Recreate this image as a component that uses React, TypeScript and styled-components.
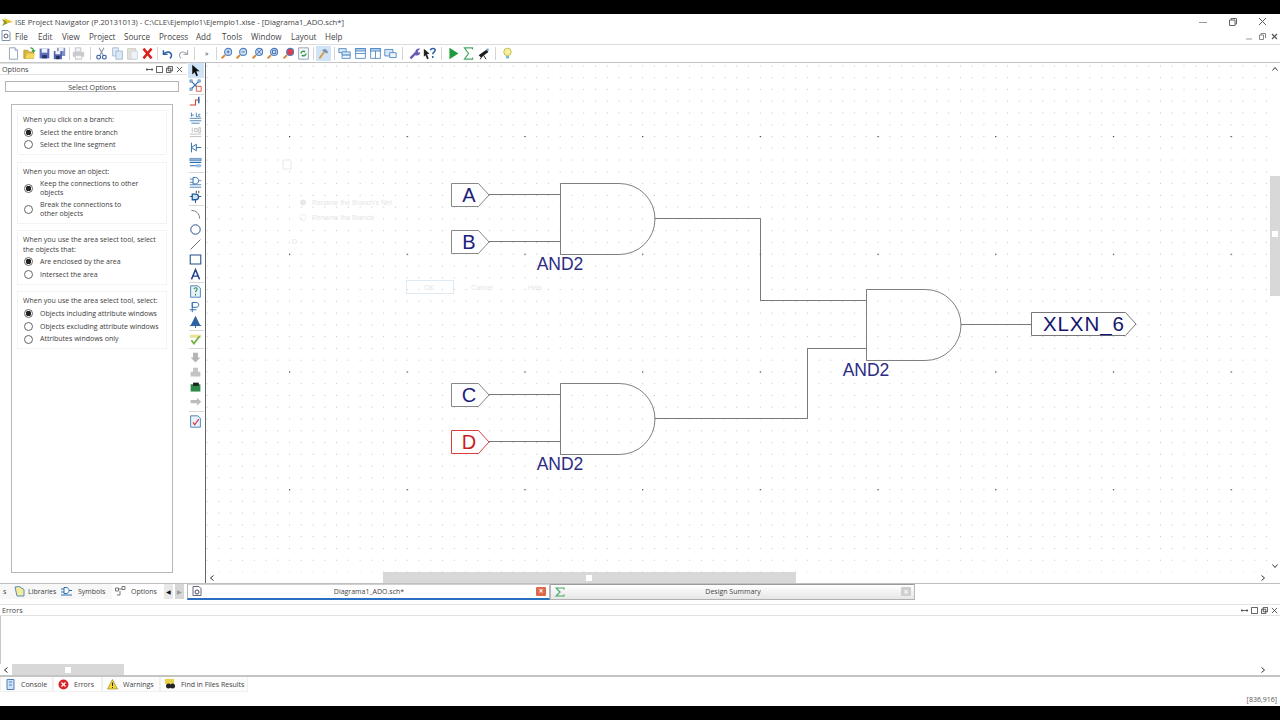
import React from 'react';
import styled, { createGlobalStyle } from 'styled-components';

const GlobalStyle = createGlobalStyle`
    html, body { margin: 0; padding: 0; background: #000; }
    body { font-family: "Open Sans", "Liberation Sans", sans-serif; color: #3a3a3a; }
    * { box-sizing: border-box; }
`;

const Shell = styled.div`
    width: 1280px;
    height: 720px;
    padding: 14px 0;
    background: #000;
    overflow: hidden;
`;

const Win = styled.div`
    height: 692px;
    background: #fff;
    display: flex;
    flex-direction: column;
`;

const TitleBar = styled.div`
    height: 15px;
    display: flex;
    align-items: center;
    font-size: 7.7px;
    color: #444;
    padding-left: 2px;
    white-space: nowrap;
`;

const TitleText = styled.span`
    margin-left: 2px;
    flex: 1;
`;

const WinButtons = styled.div`
    display: flex;
    align-items: center;
    width: 81px;
    gap: 21.5px;
`;

const MenuBar = styled.div`
    height: 15px;
    display: flex;
    align-items: center;
    font-size: 8.1px;
    color: #444;
    padding-left: 1px;
    white-space: nowrap;
`;

const MenuItem = styled.span<{ $w: number }>`
    width: ${(p) => p.$w}px;
`;

const MdiButtons = styled.div`
    margin-left: auto;
    width: 34px;
    display: flex;
    gap: 5.5px;
    align-items: center;
`;

const Toolbar = styled.div`
    height: 18px;
    flex: none;
    display: flex;
    align-items: center;
    padding-left: 6px;
    border-top: 1px solid #dcdcdc;
`;

const ToolBtn = styled.span<{ $active?: boolean }>`
    flex: none;
    width: 15.4px;
    height: 15.4px;
    display: flex;
    align-items: center;
    justify-content: center;
    background: ${(p) => (p.$active ? '#cfe4f6' : 'transparent')};
    svg { width: 13px; height: 13px; display: block; }
`;

const SideBtn = styled(ToolBtn)`
    height: 15px;
`;

const HSep = styled.span<{ $w: number }>`
    flex: none;
    width: ${(p) => p.$w}px;
    height: 13px;
    background: linear-gradient(#d4d4d4, #d4d4d4) center / 1px 100% no-repeat;
`;

const Chevrons = styled.span`
    flex: none;
    width: 16px;
    text-align: center;
    font-size: 7px;
    color: #333;
`;

const Main = styled.div`
    height: 521px;
    flex: none;
    display: grid;
    grid-template-columns: 187px 19px 1fr;
    border-top: 1px solid #c4c4c4;
`;

const SidePanel = styled.div`
    display: flex;
    flex-direction: column;
    padding-bottom: 10px;
`;

const DockHeader = styled.div`
    height: 12px;
    flex: none;
    display: flex;
    align-items: center;
    font-size: 7.2px;
    padding-left: 2px;
    color: #444;
    border: 1px solid #e2e2e2;
    border-width: 1px 0;
`;

const DockIcons = styled.div<{ $pad: number }>`
    margin-left: auto;
    display: flex;
    gap: 3px;
    padding-right: ${(p) => p.$pad}px;
    svg { width: 7px; height: 7px; display: block; }
`;

const SelectButton = styled.div`
    margin: 6px 8px 0 5px;
    height: 11px;
    flex: none;
    display: flex;
    align-items: center;
    justify-content: center;
    font-size: 7.1px;
    color: #444;
    border: 1px solid #b4b4b4;
`;

const OptionsBox = styled.div`
    margin: 12px 14px 0 11px;
    flex: 1;
    border: 1px solid #b8b8b8;
    padding: 5px;
    display: flex;
    flex-direction: column;
    gap: 6.5px;
`;

const OptionGroup = styled.div`
    border: 1px solid #f3f3f3;
    padding: 4px 2px 3px 5px;
    font-size: 7px;
    line-height: 9.4px;
    color: #3c3c3c;
`;

const GroupTitle = styled.div`
    margin-bottom: 1.5px;
`;

const RadioRow = styled.div<{ $tall?: boolean }>`
    display: flex;
    align-items: center;
    gap: 7px;
    height: ${(p) => (p.$tall ? 21 : 12.7)}px;
`;

const RadioLabel = styled.span<{ $narrow?: boolean }>`
    max-width: ${(p) => (p.$narrow ? '100px' : 'none')};
`;

const Radio = styled.span<{ $on?: boolean }>`
    flex: none;
    width: 9px;
    height: 9px;
    margin-left: 1px;
    border-radius: 50%;
    border: 1px solid #666;
    background: ${(p) => (p.$on ? 'radial-gradient(circle, #222 0 2.6px, #fff 3px)' : '#fff')};
`;

const ToolColumn = styled.div`
    display: flex;
    flex-direction: column;
    align-items: center;
    border-right: 1px solid #666;
    background: #fff;
`;

const VSep = styled.span<{ $h: number }>`
    flex: none;
    width: 15px;
    height: ${(p) => p.$h}px;
    background: linear-gradient(#d8d8d8, #d8d8d8) center / 100% 1px no-repeat;
`;

const CanvasColumn = styled.div`
    display: flex;
    flex-direction: column;
    min-width: 0;
`;

const CanvasRow = styled.div`
    flex: 1;
    display: flex;
    min-height: 0;
`;

const Sheet = styled.svg`
    flex: 1;
    min-width: 0;
    display: block;
    height: 509px;
`;

const VScroll = styled.div`
    width: 10px;
    flex: none;
    position: relative;
    display: flex;
    flex-direction: column;
    justify-content: space-between;
    align-items: center;
    padding: 3px 0;
    background: linear-gradient(#d8d8d8, #d8d8d8) 0 113px / 100% 120px no-repeat;
`;

const ScrollKnob = styled.span<{ $left?: number; $top?: number }>`
    position: absolute;
    width: 6px;
    height: 6px;
    background: #fff;
    left: ${(p) => p.$left ?? 2}px;
    top: ${(p) => p.$top ?? 3}px;
`;

const HScroll = styled.div`
    height: 11px;
    flex: none;
    display: flex;
    align-items: center;
    justify-content: space-between;
    padding: 0 14px 0 3px;
    position: relative;
`;

const HThumb = styled.span<{ $left: number; $w: number }>`
    position: absolute;
    top: 0;
    height: 11px;
    left: ${(p) => p.$left}px;
    width: ${(p) => p.$w}px;
    background: #d8d8d8;
`;

const Arrow = styled.svg`
    width: 6px;
    height: 6px;
    display: block;
    position: relative;
`;

const TabRow = styled.div`
    height: 17px;
    flex: none;
    display: flex;
    border-top: 1px solid #c0c0c0;
    font-size: 7px;
    color: #444;
`;

const SideTabs = styled.div`
    width: 187px;
    flex: none;
    height: 15px;
    display: flex;
    align-items: center;
    white-space: nowrap;
`;

const SideTab = styled.span<{ $w: number; $gap?: number; $white?: boolean }>`
    flex: none;
    width: ${(p) => p.$w}px;
    height: 15px;
    display: flex;
    align-items: center;
    gap: ${(p) => p.$gap ?? 3}px;
    padding-left: 3px;
    background: ${(p) => (p.$white ? '#fff' : '#f7f7f7')};
    svg { width: 11px; height: 11px; flex: none; }
`;

const ArrowBtn = styled.span<{ $dim?: boolean }>`
    flex: none;
    width: 9px;
    height: 15px;
    margin-right: 2px;
    display: flex;
    align-items: center;
    justify-content: center;
    background: ${(p) => (p.$dim ? '#d6d6d6' : '#e8e8e8')};
    color: ${(p) => (p.$dim ? '#999' : '#111')};
    font-size: 6px;
`;

const DocTab = styled.div<{ $active?: boolean; $w: number }>`
    flex: none;
    width: ${(p) => p.$w}px;
    height: 15.5px;
    display: flex;
    align-items: center;
    padding: 0 3px 0 4px;
    background: ${(p) => (p.$active ? '#fff' : 'linear-gradient(#fff, #e6e6e6)')};
    border: 1px solid #b8b8b8;
    border-top-color: ${(p) => (p.$active ? '#d0d0d0' : '#9a9a9a')};
    border-bottom: ${(p) => (p.$active ? '2px solid #2a6fc0' : '1px solid #b0b0b0')};
    svg { width: 10px; height: 10px; flex: none; }
`;

const DocLabel = styled.span`
    flex: 1;
    text-align: center;
`;

const CloseBox = styled.span<{ $red?: boolean }>`
    flex: none;
    width: 10px;
    height: 9px;
    display: flex;
    align-items: center;
    justify-content: center;
    border-radius: 1px;
    background: ${(p) => (p.$red ? '#e0674a' : '#cfcfcf')};
    color: #fff;
    font-size: 8px;
    line-height: 1;
    font-weight: 700;
`;

const ErrorsPanel = styled.div`
    margin-top: 4px;
    flex: 1;
    display: flex;
    flex-direction: column;
`;

const ErrorsBody = styled.div`
    height: 48px;
    flex: none;
    border-left: 1px solid #c8c8c8;
`;

const ErrorsScroll = styled(HScroll)`
    padding-right: 14px;
    border-bottom: 2px solid #c4c4c4;
    height: 13px;
`;

const BottomTabs = styled.div`
    height: 15px;
    flex: none;
    display: flex;
    font-size: 7px;
    color: #444;
    white-space: nowrap;
`;

const BottomTab = styled.span<{ $w: number; $active?: boolean }>`
    flex: none;
    width: ${(p) => p.$w}px;
    height: 15px;
    display: flex;
    align-items: center;
    gap: 5px;
    padding-left: 4px;
    border: 1px solid #f0f0f0;
    border-top: none;
    background: ${(p) => (p.$active ? '#fff' : '#fcfcfc')};
    svg { width: 11px; height: 11px; flex: none; }
`;

const StatusBar = styled.div`
    flex: 1;
    display: flex;
    align-items: center;
    justify-content: flex-end;
    font-size: 7px;
    color: #555;
    padding-right: 3px;
`;

const Sv = ({ children }: { children: React.ReactNode }) => <svg viewBox="0 0 16 16">{children}</svg>;

const Lens = ({ children, tint = '#cfe3f7' }: { children?: React.ReactNode; tint?: string }) => (
    <Sv>
        <path d="M6 10 2 14" stroke="#d9822b" strokeWidth="2.4" />
        <circle cx="10" cy="6" r="4.3" fill={tint} stroke="#4f7fb8" strokeWidth="1.3" />
        {children}
    </Sv>
);

const topIcons: Record<string, React.ReactNode> = {
    page: <Sv><path d="M3 1h7l3 3v11H3z" fill="#fff" stroke="#7f93ad" /><path d="M10 1v3h3" fill="#dfe8f2" stroke="#7f93ad" /></Sv>,
    open: <Sv><path d="M1 4h5l1 2h6v8H1z" fill="#d8b63a" stroke="#9b7e1f" strokeWidth=".7" /><path d="M3 14l2-6h10l-2 6z" fill="#f2d75c" /><path d="M9 1c3 0 4 1 4 4M11 4l2 2 2-2" fill="none" stroke="#3fa34a" strokeWidth="1.4" /></Sv>,
    save: <Sv><path d="M2 2h12v12H2z" fill="#5b6db4" /><path d="M4.500 2h7v5h-7z" fill="#eef1fa" /><path d="M5 10h6v4H5z" fill="#26346f" /></Sv>,
    saveAll: <Sv><path d="M5 1h10v10H5z" fill="#7f8fc8" /><path d="M7 1h6v4H7z" fill="#eef1fa" /><path d="M1 5h10v10H1z" fill="#4f61a8" /><path d="M3 5h6v4H3z" fill="#eef1fa" /><path d="M4 11h4v4H4z" fill="#1f2c63" /></Sv>,
    print: <Sv><path d="M4 1h7v5H4z" fill="#f2f2f2" stroke="#bbb" /><path d="M1 6h14v6H1z" fill="#c9ccd2" /><path d="M4 10h8v5H4z" fill="#f6f6f6" stroke="#bbb" /></Sv>,
    cut: <Sv><path d="M5 1l5 9M11 1 6 10" stroke="#8d97a3" strokeWidth="1.3" /><circle cx="4.500" cy="12.500" r="2.300" fill="none" stroke="#31589a" strokeWidth="1.4" /><circle cx="11.500" cy="12.500" r="2.300" fill="none" stroke="#31589a" strokeWidth="1.4" /></Sv>,
    copy: <Sv><path d="M2 1h7v10H2z" fill="#e4edf7" stroke="#9ab3cf" /><path d="M6 5h8v10H6z" fill="#dce8f5" stroke="#9ab3cf" /></Sv>,
    paste: <Sv><path d="M2 2h10v13H2z" fill="#e7e2d4" stroke="#c4c4bb" /><path d="M6 5h8v10H6z" fill="#eef2f7" stroke="#c8d2de" /></Sv>,
    del: <Sv><path d="M3 2l10 12M13 2 3 14" stroke="#d8201c" strokeWidth="3" /></Sv>,
    undo: <Sv><path d="M3 4v5h5" fill="none" stroke="#2b5fa8" strokeWidth="1.8" /><path d="M3 9c3-4 9-4 10 1 0 2-1 3-2 4" fill="none" stroke="#2b5fa8" strokeWidth="1.8" /></Sv>,
    redo: <Sv><path d="M13 4v5H8" fill="none" stroke="#a4a8ae" strokeWidth="1.4" /><path d="M13 9c-3-4-9-4-10 1 0 2 1 3 2 4" fill="none" stroke="#a4a8ae" strokeWidth="1.4" /></Sv>,
    zoomIn: <Lens><path d="M8 6h4M10 4v4" stroke="#2b5fa8" /></Lens>,
    zoomOut: <Lens><path d="M8 6h4" stroke="#2b5fa8" /></Lens>,
    zoomFit: <Lens><path d="M7 3l6 6M13 3 7 9" stroke="#2b5fa8" /></Lens>,
    zoomBox: <Lens><path d="M8 4h4v4H8z" fill="none" stroke="#2b5fa8" /></Lens>,
    zoomRed: <Lens tint="#e23b4a" />,
    refresh: <Sv><path d="M2 1h12v14H2z" fill="#f6f8fb" stroke="#7f93ad" /><path d="M5 8a3 3 0 0 1 5-2M11 8a3 3 0 0 1-5 2" fill="none" stroke="#2f9a4a" strokeWidth="1.8" /></Sv>,
    hammer: <Sv><path d="M3 14 9 6" stroke="#d99a3a" strokeWidth="2.2" /><path d="M6 4l4-2 4 4-2 2z" fill="#7f8ea6" /></Sv>,
    cascade: <Sv><path d="M1 2h9v5H1z" fill="#dbe9f7" stroke="#3f7fc0" /><path d="M5 6h10v4H5z" fill="#dbe9f7" stroke="#3f7fc0" /><path d="M5 10h10v4H5z" fill="#eef5fb" stroke="#3f7fc0" /></Sv>,
    tileH: <Sv><path d="M2 2h12v12H2z" fill="#fff" stroke="#3f7fc0" /><path d="M2 2h12v3H2zM2 8h12" fill="#bcd6ef" stroke="#3f7fc0" /></Sv>,
    tileV: <Sv><path d="M2 2h12v12H2z" fill="#fff" stroke="#3f7fc0" /><path d="M2 2h12v3H2zM8 5v9" fill="#bcd6ef" stroke="#3f7fc0" /></Sv>,
    restore: <Sv><path d="M1 3h10v8H1z" fill="#dbe9f7" stroke="#3f7fc0" /><path d="M7 7h8v6H7z" fill="#eef5fb" stroke="#3f7fc0" /></Sv>,
    wrench: <Sv><path d="M3 14 10 7" stroke="#6a5ab5" strokeWidth="3" /><path d="M9 6c0-3 3-5 6-4l-3 3 1 2 2-1c0 4-3 5-6 4z" fill="#6a5ab5" /></Sv>,
    helpQ: <Sv><path d="M1 2l7 6-3 1 2 5-2 1-2-5-2 2z" fill="#222" /><path d="M9 4c1-3 6-3 6 0 0 2-3 2-3 5M12 11v2.400" fill="none" stroke="#2b5fa8" strokeWidth="1.9" /></Sv>,
    play: <Sv><path d="M3 1l11 7-11 7z" fill="#1f9a3c" /></Sv>,
    sigma: <Sv><path d="M13 3V1H3l5 7-5 7h10v-2" fill="none" stroke="#46a86a" strokeWidth="1.5" /></Sv>,
    scope: <Sv><path d="M2 10 12 3l2 3-9 7z" fill="#1b1b1b" /><path d="M7 10l-3 5M8 10l3 5" stroke="#222" strokeWidth="1.2" /><circle cx="13" cy="3.500" r="1.600" fill="#7aa3cc" /></Sv>,
    bulb: <Sv><circle cx="8" cy="6" r="4.600" fill="#f6ef9c" stroke="#b8b04a" /><path d="M6 11h4v3H6z" fill="#76b7d8" /></Sv>,
};

const sideIcons: Record<string, React.ReactNode> = {
    arrow: <Sv><path d="M4 1v12l3-3 2 5 2-1-2-5h4z" fill="#111" /></Sv>,
    net: <Sv><path d="M3 3l9 9M12 3l-9 9" stroke="#2f6fae" strokeWidth="1.4" /><path d="M1 1h3v3H1zM11 1h3v3h-3zM1 11h3v3H1z" fill="#9cc0e2" stroke="#2f6fae" strokeWidth=".6" /><path d="M9 9h6v6H9z" fill="#fff" stroke="#d83a2a" /></Sv>,
    wire: <Sv><path d="M1 11h7V5h5" fill="none" stroke="#d83a2a" strokeWidth="1.3" /><path d="M12 1v8" stroke="#2f6fae" strokeWidth="2" /></Sv>,
    abc: <Sv><path d="M1 9h14M1 12h14M3 15h10" stroke="#2f6fae" /><path d="M3 2v5M3 5h3M9 2v5h2M14 4h-2v3h2" fill="none" stroke="#2f6fae" /></Sv>,
    abcDim: <Sv><path d="M1 10h14M1 13h14" stroke="#b5b5b5" /><path d="M4 2v6M7 3h3v4H7zM12 2h2v6h-2z" fill="none" stroke="#b5b5b5" /></Sv>,
    bus: <Sv><path d="M3 2v12M3 8l6-4v8zM9 8h6" fill="none" stroke="#2f6fae" strokeWidth="1.2" /></Sv>,
    stack: <Sv><path d="M1 3h14v3H1z" fill="#8fb3d6" stroke="#2f6fae" strokeWidth=".7" /><path d="M1 8h14M1 12h14" stroke="#2f6fae" strokeWidth="1.4" /><path d="M9 10h5v4H9z" fill="#9cc0e2" /></Sv>,
    gate: <Sv><path d="M1 12h14M1 15h14" stroke="#2f6fae" /><path d="M1 5h4M11 7h4M1 9h4" stroke="#2f6fae" /><path d="M5 3h3c5 0 5 8 0 8H5z" fill="#fff" stroke="#2f6fae" strokeWidth="1.2" /></Sv>,
    gateA: <Sv><path d="M1 8h3M11 8h4M8 12v4" stroke="#1f5a98" strokeWidth="1.2" /><path d="M4 5h4c5 0 5 7 0 7H4z" fill="#cfe3f7" stroke="#1f5a98" strokeWidth="1.6" /><path d="M9 1v3M12 1v3" stroke="#222" /></Sv>,
    arc: <Sv><path d="M3 3c6 0 10 4 10 10" fill="none" stroke="#667" strokeWidth="1.1" /></Sv>,
    circle: <Sv><circle cx="8" cy="8" r="5.800" fill="none" stroke="#1f4f8a" strokeWidth="1.2" /></Sv>,
    line: <Sv><path d="M2 14 14 2" stroke="#667" strokeWidth="1.2" /></Sv>,
    rect: <Sv><path d="M1.500 2.500h13v11h-13z" fill="none" stroke="#1f4f8a" strokeWidth="1.3" /></Sv>,
    text: <Sv><path d="M3 14 8 2l5 12M5 10h6" fill="none" stroke="#1f3f86" strokeWidth="1.8" /></Sv>,
    sym: <Sv><path d="M2 1h9l3 3v11H2z" fill="#e8f2fb" stroke="#2f6fae" /><path d="M6 5c1-2 4-2 4 0 0 2-2 2-2 4M8 11v2" fill="none" stroke="#1f8a4a" strokeWidth="1.3" /></Sv>,
    port: <Sv><path d="M4 3h5c4 0 4 6 0 6H4zM4 3v12M1 12h8" fill="none" stroke="#2f6fae" strokeWidth="1.2" /></Sv>,
    tri: <Sv><path d="M8 1 2 13h12z" fill="#2a62a4" /><path d="M1 13h14M8 13v3" stroke="#1f4f8a" /></Sv>,
    check: <Sv><path d="M1 2h14v4H1z" fill="#e8e49a" /><path d="M3 9l3 4 7-9" fill="none" stroke="#6cae3a" strokeWidth="2" /></Sv>,
    dimA: <Sv><path d="M5 2h6v6h3l-6 6-6-6h3z" fill="#b4b4b4" /></Sv>,
    dimB: <Sv><path d="M5 2h6v5h3v6H2V7h3z" fill="#c4c4c4" /></Sv>,
    green: <Sv><path d="M2 4h12v9H2z" fill="#2f8a4a" /><path d="M5 2h7v4H5z" fill="#222" /></Sv>,
    dimC: <Sv><path d="M2 5h8V2l5 5-5 5V9H2z" fill="#bcbcbc" /></Sv>,
    doc: <Sv><path d="M2 1h9l3 3v11H2z" fill="#e8f2fb" stroke="#2f6fae" /><path d="M5 9l2 3 5-7" fill="none" stroke="#d82a3a" strokeWidth="1.4" /></Sv>,
};

const Glyph = ({ d }: { d: string }) => (
    <svg viewBox="0 0 8 8"><path d={d} fill="none" stroke="#333" strokeWidth=".9" /></svg>
);

const ChevronLeft = () => <Arrow viewBox="0 0 6 6"><path d="M4.500 .5 1.500 3l3 2.500" fill="none" stroke="#333" /></Arrow>;
const ChevronRight = () => <Arrow viewBox="0 0 6 6"><path d="M1.500 .5 4.500 3l-3 2.500" fill="none" stroke="#333" /></Arrow>;
const ChevronUp = () => <Arrow viewBox="0 0 6 6"><path d="M.5 4.500 3 1.500l2.500 3" fill="none" stroke="#333" /></Arrow>;
const ChevronDown = () => <Arrow viewBox="0 0 6 6"><path d="M.5 1.500 3 4.500l2.500-3" fill="none" stroke="#333" /></Arrow>;

const DockControls = ({ pad }: { pad: number }) => (
    <DockIcons $pad={pad}>
        <Glyph d="M0 4h8M1.500 2.500 0 4l1.500 1.500M6.500 2.500 8 4 6.500 5.500" />
        <Glyph d="M.5.5h7v7h-7z" />
        <Glyph d="M2.500.5h5v5h-5zM.5 2.500h5v5h-5z" />
        <Glyph d="M1 1l6 6M7 1 1 7" />
    </DockIcons>
);

// top toolbar, in order; numbers are separators, -1 is the overflow mark
const topBar: (string | number)[] = [
    'page', 'open', 'save', 'saveAll', 3.5, 'print', 7.5, 'cut', 'copy', 'paste', 'del', 4.5, 'undo', 'redo', 8, -1,
    4, 'zoomIn', 'zoomOut', 'zoomFit', 'zoomBox', 'zoomRed', 'refresh', 4.5, 'hammer', 6, 'cascade', 'tileH', 'tileV', 'restore', 8,
    'wrench', 'helpQ', 8, 'play', 'sigma', 'scope', 8, 'bulb',
];

const sideBar: (string | number)[] = [
    'arrow', 'net', 2, 'wire', 'abc', 'abcDim', 'bus', 'stack', 4, 'gate', 'gateA', 2.5, 'arc', 'circle', 'line', 'rect', 'text', 2,
    'sym', 'port', 'tri', 3, 'check', 3, 'dimA', 'dimB', 'green', 'dimC', 4, 'doc',
];

const menus: [string, number][] = [
    ['File', 23], ['Edit', 24], ['View', 27], ['Project', 35], ['Source', 35], ['Process', 37],
    ['Add', 26], ['Tools', 29], ['Window', 40], ['Layout', 34], ['Help', 30],
];

const optionGroups = [
    { title: 'When you click on a branch:', items: ['Select the entire branch', 'Select the line segment'] },
    { title: 'When you move an object:', tall: true, items: ['Keep the connections to other objects', 'Break the connections to other objects'] },
    { title: 'When you use the area select tool, select the objects that:', items: ['Are enclosed by the area', 'Intersect the area'] },
    { title: 'When you use the area select tool, select:', items: ['Objects including attribute windows', 'Objects excluding attribute windows', 'Attributes windows only'] },
];

const Gate = ({ x, y }: { x: number; y: number }) => (
    <path d={`M${x} ${y}h59a35.500 35.500 0 0 1 0 71h-59z`} fill="none" stroke="#707070" strokeWidth=".9" />
);

const Port = ({ y, name, red }: { y: number; name: string; red?: boolean }) => (
    <g>
        <path d={`M451.500 ${y}h27l10.500 11.500-10.500 11.500h-27z`} fill="#fff" stroke={red ? '#d84040' : '#888'} />
        <text x="469" y={y + 18.5} textAnchor="middle" fontSize="20" fill={red ? '#c81e1e' : '#20207a'}>{name}</text>
    </g>
);

const Schematic = () => (
    <Sheet viewBox="206 63 1064 509" preserveAspectRatio="none" fontFamily="'Liberation Sans', sans-serif">
        <defs>
            <pattern id="minor" x="289" y="136" width="11.77" height="11.77" patternUnits="userSpaceOnUse">
                <rect width="1" height="1" fill="#c4c4c4" />
            </pattern>
            <pattern id="major" x="289" y="136" width="117.7" height="117.7" patternUnits="userSpaceOnUse">
                <rect width="1.2" height="1.2" fill="#444" />
            </pattern>
        </defs>
        <rect x="206" y="63" width="1064" height="509" fill="url(#minor)" />
        <rect x="206" y="63" width="1064" height="509" fill="url(#major)" />

        {/* leftover of a closed dialog, barely visible */}
        <g fontSize="7" fill="#e6e6e6">
            <path d="M283 160h6l2 2v7h-8z" fill="none" stroke="#e8e8e8" />
            <circle cx="303" cy="202.500" r="3" fill="#e8e8e8" />
            <circle cx="303" cy="217.500" r="3" fill="none" stroke="#efefef" />
            <text x="312" y="205">Rename the Branch's Net</text>
            <text x="312" y="220">Rename the Branch</text>
            <text x="292" y="244">D</text>
            <rect x="406.500" y="280.500" width="47" height="13" fill="none" stroke="#dfeaf3" />
            <text x="429" y="290" textAnchor="middle">OK</text>
            <text x="482" y="290" textAnchor="middle">Cancel</text>
            <text x="535" y="290" textAnchor="middle">Help</text>
        </g>

        <g fill="none" stroke="#6a6a6a" strokeWidth=".9">
            <path d="M489 194.500h71M489 241.500h71M489 394.500h71M489 441.500h71" />
            <path d="M655 218.500h105.500v82H866M655 418.500h152.500v-70H866M961 324.500h70" />
        </g>
        <Gate x={560.5} y={183.5} />
        <Gate x={560.5} y={383.5} />
        <Gate x={866.5} y={289.5} />

        <Port y={183.5} name="A" />
        <Port y={230.5} name="B" />
        <Port y={383.5} name="C" />
        <Port y={430.5} name="D" red />

        <path d="M1031.500 312.500h94l10.500 11.500-10.500 11.500h-94z" fill="#fff" stroke="#777" />
        <text x="1043" y="331" fontSize="20.500" letterSpacing=".9" fill="#14146e">XLXN_6</text>

        <g fontSize="17.500" textAnchor="middle" fill="#2c2c86">
            <text x="560" y="270">AND2</text>
            <text x="560" y="470">AND2</text>
            <text x="866" y="376">AND2</text>
        </g>
    </Sheet>
);

const App = () => (
    <Shell>
        <GlobalStyle />
        <Win>
            <TitleBar>
                <svg width="11" height="10" viewBox="0 0 11 10"><path d="M0 2l8 3-8 4 2-3.500z" fill="#8a9a1e" /><path d="M2 1l9 4-6 1z" fill="#e8c020" /></svg>
                <TitleText>ISE Project Navigator (P.20131013) - C:\CLE\Ejemplo1\Ejemplo1.xise - [Diagrama1_ADO.sch*]</TitleText>
                <WinButtons>
                    <svg width="8" height="8" viewBox="0 0 8 8"><path d="M0 4.500h8" stroke="#999" /></svg>
                    <svg width="8" height="8" viewBox="0 0 8 8"><path d="M.5 2h5.500v5.500H.5zM2 2V.5h5.500V6H6" fill="none" stroke="#666" /></svg>
                    <svg width="9" height="9" viewBox="0 0 9 9"><path d="M1 1l7 7M8 1 1 8" stroke="#555" /></svg>
                </WinButtons>
            </TitleBar>
            <MenuBar>
                <MenuItem $w={14}>
                    <svg width="10" height="11" viewBox="0 0 10 11"><path d="M1 .5h6l2 2v8H1z" fill="#fff" stroke="#7f93ad" /><circle cx="5" cy="6" r="2" fill="none" stroke="#557" /></svg>
                </MenuItem>
                {menus.map(([name, w]) => (
                    <MenuItem key={name} $w={w}>{name}</MenuItem>
                ))}
                <MdiButtons>
                    <svg width="7" height="7" viewBox="0 0 7 7"><path d="M0 6h6" stroke="#999" /></svg>
                    <svg width="7" height="7" viewBox="0 0 7 7"><path d="M.5 2h4v4.500h-4zM2 2V.5h4.500V5" fill="none" stroke="#888" /></svg>
                    <svg width="7" height="7" viewBox="0 0 7 7"><path d="M1 1l5 5M6 1 1 6" stroke="#555" strokeWidth="1.2" /></svg>
                </MdiButtons>
            </MenuBar>
            <Toolbar>
                {topBar.map((item, i) =>
                    item === -1 ? (
                        <Chevrons key={i}>»</Chevrons>
                    ) : typeof item === 'number' ? (
                        <HSep key={i} $w={item} />
                    ) : (
                        <ToolBtn key={i} $active={item === 'hammer'}>{topIcons[item]}</ToolBtn>
                    ),
                )}
            </Toolbar>
            <Main>
                <SidePanel>
                    <DockHeader>
                        Options
                        <DockControls pad={4} />
                    </DockHeader>
                    <SelectButton>Select Options</SelectButton>
                    <OptionsBox>
                        {optionGroups.map((group) => (
                            <OptionGroup key={group.title}>
                                <GroupTitle>{group.title}</GroupTitle>
                                {group.items.map((item, i) => (
                                    <RadioRow key={item} $tall={group.tall}>
                                        <Radio $on={i === 0} />
                                        <RadioLabel $narrow={group.tall}>{item}</RadioLabel>
                                    </RadioRow>
                                ))}
                            </OptionGroup>
                        ))}
                    </OptionsBox>
                </SidePanel>
                <ToolColumn>
                    {sideBar.map((item, i) =>
                        typeof item === 'number' ? (
                            <VSep key={i} $h={item} />
                        ) : (
                            <SideBtn key={i} $active={item === 'arrow'}>{sideIcons[item]}</SideBtn>
                        ),
                    )}
                </ToolColumn>
                <CanvasColumn>
                    <CanvasRow>
                        <Schematic />
                        <VScroll>
                            <ChevronUp />
                            <ScrollKnob $top={168} />
                            <ChevronDown />
                        </VScroll>
                    </CanvasRow>
                    <HScroll>
                        <HThumb $left={177} $w={413} />
                        <ScrollKnob $left={380} $top={3} />
                        <ChevronLeft />
                        <ChevronRight />
                    </HScroll>
                </CanvasColumn>
            </Main>
            <TabRow>
                <SideTabs>
                    <SideTab $w={11}>s</SideTab>
                    <SideTab $w={47}>
                        <svg viewBox="0 0 11 11"><path d="M1 1l4-.500 5 3V10H3z" fill="#f4ec9a" stroke="#5a8ab8" /></svg>
                        Libraries
                    </SideTab>
                    <SideTab $w={54} $gap={6}>
                        <svg viewBox="0 0 11 11"><path d="M0 3h3M0 6h3M8 4.500h3M0 9h11" stroke="#2f6fae" /><path d="M3 1.500h2c4 0 4 6 0 6H3z" fill="#fff" stroke="#2f6fae" /></svg>
                        Symbols
                    </SideTab>
                    <SideTab $w={52} $gap={5} $white>
                        <svg viewBox="0 0 11 11"><path d="M.5 2h3v3h-3zM7 .5h3v3H7z" fill="none" stroke="#777" /><path d="M3.500 3H7M5 5v4H2" fill="none" stroke="#777" /></svg>
                        Options
                    </SideTab>
                    <ArrowBtn>◀</ArrowBtn>
                    <ArrowBtn $dim>▶</ArrowBtn>
                </SideTabs>
                <DocTab $active $w={363}>
                    <svg viewBox="0 0 10 10"><path d="M1 .5h6l2 2v7H1z" fill="#fff" stroke="#667" /><circle cx="5" cy="6" r="2" fill="none" stroke="#446" /></svg>
                    <DocLabel>Diagrama1_ADO.sch*</DocLabel>
                    <CloseBox $red>×</CloseBox>
                </DocTab>
                <DocTab $w={365}>
                    <svg viewBox="0 0 10 10"><path d="M9 2.500V1H1l4 4-4 4h8V7.500" fill="none" stroke="#46a86a" strokeWidth="1.200" /></svg>
                    <DocLabel>Design Summary</DocLabel>
                    <CloseBox>×</CloseBox>
                </DocTab>
            </TabRow>
            <ErrorsPanel>
                <DockHeader>
                    Errors
                    <DockControls pad={2} />
                </DockHeader>
                <ErrorsBody />
                <ErrorsScroll>
                    <HThumb $left={12} $w={112} />
                    <ScrollKnob $left={65} $top={3} />
                    <ChevronLeft />
                    <ChevronRight />
                </ErrorsScroll>
                <BottomTabs>
                    <BottomTab $w={53}>
                        <svg viewBox="0 0 11 11"><path d="M2 .5h7v10H2z" fill="#cfe3f7" stroke="#4f7fb8" /><path d="M4 3h3M4 6h3" stroke="#4f7fb8" /></svg>
                        Console
                    </BottomTab>
                    <BottomTab $w={49} $active>
                        <svg viewBox="0 0 11 11"><circle cx="5.500" cy="5.500" r="5" fill="#d8232a" /><path d="M3.500 3.500l4 4M7.500 3.500l-4 4" stroke="#fff" strokeWidth="1.300" /></svg>
                        Errors
                    </BottomTab>
                    <BottomTab $w={58}>
                        <svg viewBox="0 0 11 11"><path d="M5.500.5 10.500 10H.5z" fill="#f6d72e" stroke="#8a7a20" strokeWidth=".6" /><path d="M5.500 3.500v3.500M5.500 8v1" stroke="#222" /></svg>
                        Warnings
                    </BottomTab>
                    <BottomTab $w={88}>
                        <svg viewBox="0 0 11 11"><path d="M0 0h9v5H0z" fill="#e8d24a" /><circle cx="3.500" cy="7" r="2.500" fill="#222" /><circle cx="7.500" cy="7" r="2.500" fill="#222" /></svg>
                        Find in Files Results
                    </BottomTab>
                </BottomTabs>
                <StatusBar>[836,916]</StatusBar>
            </ErrorsPanel>
        </Win>
    </Shell>
);

export default App;
